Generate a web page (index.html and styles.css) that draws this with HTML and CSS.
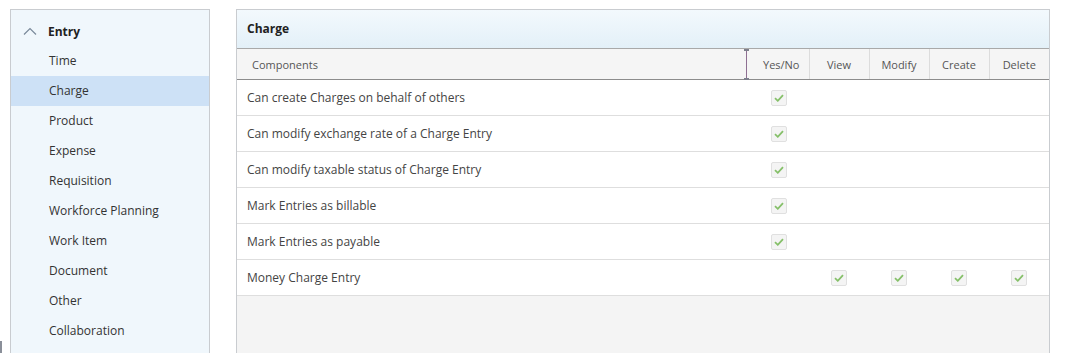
FILE: index.html
```html
<!DOCTYPE html>
<html lang="en">
<head>
  <meta charset="UTF-8">
  <title>Permissions - Charge</title>
  <link rel="stylesheet" href="styles.css">
</head>
<body>
  <span class="edge-mark"></span>
  <div class="page">
    <div class="sidebar">
      <div class="group">
        <svg class="chev" width="14" height="8" viewBox="0 0 14 8"><path d="M1 7.5 L7 1.5 L13 7.5" fill="none" stroke="#7a8a9a" stroke-width="1.2"/></svg>
        <span>Entry</span>
      </div>
      <a class="item">Time</a>
      <a class="item active">Charge</a>
      <a class="item">Product</a>
      <a class="item">Expense</a>
      <a class="item">Requisition</a>
      <a class="item">Workforce Planning</a>
      <a class="item">Work Item</a>
      <a class="item">Document</a>
      <a class="item">Other</a>
      <a class="item">Collaboration</a>
    </div>

    <div class="panel">
      <div class="panel-title">Charge</div>
      <table class="perms">
        <colgroup>
          <col class="c-name"><col class="c-yes"><col class="c-op"><col class="c-op"><col class="c-op"><col class="c-op">
        </colgroup>
        <thead>
          <tr>
            <th class="name">Components</th>
            <th class="yes"><span class="resizer"></span>Yes/No</th>
            <th>View</th>
            <th>Modify</th>
            <th>Create</th>
            <th>Delete</th>
          </tr>
        </thead>
        <tbody id="permRows"></tbody>
      </table>
    </div>
  </div>

  <script>
    const rows = [
      { name: "Can create Charges on behalf of others", yes: true },
      { name: "Can modify exchange rate of a Charge Entry", yes: true },
      { name: "Can modify taxable status of Charge Entry", yes: true },
      { name: "Mark Entries as billable", yes: true },
      { name: "Mark Entries as payable", yes: true },
      { name: "Money Charge Entry", ops: true }
    ];

    const box = '<span class="check"><svg width="10" height="8" viewBox="0 0 10 8"><path d="M1 4.2 L3.8 6.8 L9 1.2" fill="none" stroke="#86c06a" stroke-width="1.8"/></svg></span>';

    const tbody = document.getElementById("permRows");
    rows.forEach(r => {
      const ops = r.ops ? box : "";
      tbody.innerHTML += `<tr>
        <td class="name">${r.name}</td>
        <td class="yes">${r.yes ? box : ""}</td>
        <td>${ops}</td><td>${ops}</td><td>${ops}</td><td>${ops}</td>
      </tr>`;
    });
  </script>
</body>
</html>
```

FILE: styles.css
```css
body {
  margin: 0;
  font-family: "Open Sans", Arial, sans-serif;
  font-size: 12px;
  color: #333;
  background: #fff;
  overflow: hidden;
}

.edge-mark {
  position: absolute;
  left: 0;
  top: 341px;
  width: 2px;
  height: 14px;
  background: #8a8f99;
}

.page {
  display: flex;
  gap: 26px;
  padding: 9px 0 0 10px;
}

.sidebar {
  box-sizing: border-box;
  width: 200px;
  height: 360px;
  border: 1px solid #c9ccd0;
  background: #f0f7fc;
  padding-top: 6px;
}
.group {
  display: flex;
  align-items: center;
  height: 30px;
  padding-left: 12px;
  font-weight: bold;
  color: #222;
}
.chev { margin-right: 11px; margin-top: -1px; }
.item {
  display: block;
  height: 30px;
  line-height: 30px;
  padding-left: 38px;
  color: #333;
}
.item.active { background: #cde1f6; }

.panel {
  box-sizing: border-box;
  width: 814px;
  height: 360px;
  border: 1px solid #c9ccd0;
  background: #f4f4f4;
}
.panel-title {
  height: 38px;
  line-height: 38px;
  padding-left: 10px;
  font-weight: bold;
  color: #222;
  background: linear-gradient(#f3f9fd, #e3f0f8);
  border-bottom: 1px solid #a9a9a9;
}

.perms {
  width: 812px;
  table-layout: fixed;
  border-collapse: collapse;
  background: #fff;
}
.c-name { width: 509px; }
.c-yes { width: 63px; }
.c-op { width: 60px; }

.perms th {
  height: 30px;
  padding: 0;
  font-weight: normal;
  font-size: 11px;
  color: #555;
  background: #f5f5f5;
  border-bottom: 1px solid #8c8c8c;
  border-left: 1px solid #dcdcdc;
  text-align: center;
}
.perms th.name {
  text-align: left;
  padding-left: 15px;
  border-left: none;
}
.perms th.yes {
  position: relative;
  border-left: none;
  padding-left: 8px;
}
.resizer {
  position: absolute;
  left: 0;
  top: 0;
  bottom: -1px;
  width: 1px;
  background: #8e6f92;
}
.resizer::before, .resizer::after {
  content: "";
  position: absolute;
  left: -2px;
  width: 5px;
  height: 2px;
  background: #7d7f8c;
}
.resizer::before { top: 0; }
.resizer::after { bottom: 0; }

.perms tbody tr:first-child td { border-top: 1px solid transparent; }

.perms td {
  height: 35px;
  padding: 0;
  text-align: center;
  border-bottom: 1px solid #dedede;
  color: #444;
  line-height: 0;
}
.perms td.name {
  text-align: left;
  padding-left: 10px;
  line-height: normal;
}
.perms td.yes { padding-left: 3px; }

.check {
  display: inline-flex;
  align-items: center;
  justify-content: center;
  box-sizing: border-box;
  width: 16px;
  height: 16px;
  border: 1px solid #e0e0e0;
  border-radius: 2px;
  background: #f4f4f4;
  vertical-align: middle;
}
```
